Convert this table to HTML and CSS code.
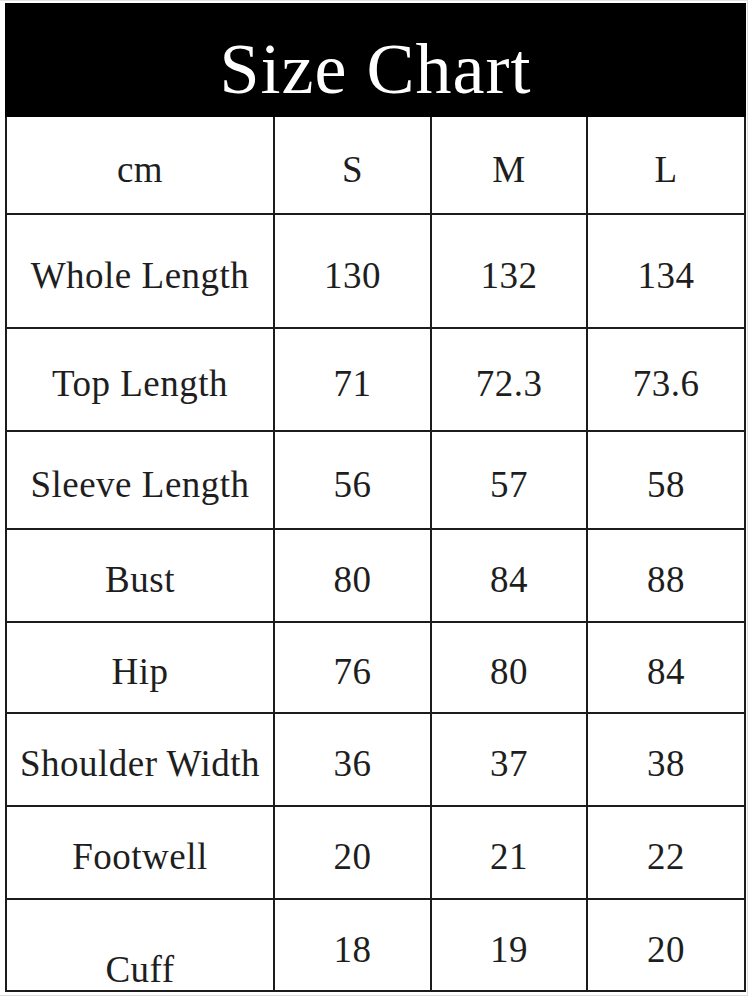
FILE: index.html
```html
<!DOCTYPE html>
<html lang="en">
<head>
<meta charset="utf-8">
<title>Size Chart</title>
<link rel="stylesheet" href="styles.css">
</head>
<body>
<div class="sheet">
  <div class="title">Size Chart</div>
  <div class="chart">
    <div class="cell">cm</div>
    <div class="cell">S</div>
    <div class="cell">M</div>
    <div class="cell">L</div>

    <div class="cell">Whole Length</div>
    <div class="cell">130</div>
    <div class="cell">132</div>
    <div class="cell">134</div>

    <div class="cell">Top Length</div>
    <div class="cell">71</div>
    <div class="cell">72.3</div>
    <div class="cell">73.6</div>

    <div class="cell">Sleeve Length</div>
    <div class="cell">56</div>
    <div class="cell">57</div>
    <div class="cell">58</div>

    <div class="cell">Bust</div>
    <div class="cell">80</div>
    <div class="cell">84</div>
    <div class="cell">88</div>

    <div class="cell">Hip</div>
    <div class="cell">76</div>
    <div class="cell">80</div>
    <div class="cell">84</div>

    <div class="cell">Shoulder Width</div>
    <div class="cell">36</div>
    <div class="cell">37</div>
    <div class="cell">38</div>

    <div class="cell">Footwell</div>
    <div class="cell">20</div>
    <div class="cell">21</div>
    <div class="cell">22</div>

    <div class="cell cell-bottom">Cuff</div>
    <div class="cell cell-last">18</div>
    <div class="cell cell-last">19</div>
    <div class="cell cell-last">20</div>
  </div>
</div>
</body>
</html>
```

FILE: styles.css
```css
html, body {
  margin: 0;
  padding: 0;
  background: #ffffff;
}

.sheet {
  width: 748px;
  height: 996px;
  border-top: 1px solid #e2e2e2;
  border-right: 1px solid #dcdcdc;
  border-bottom: 1px solid #dcdcdc;
  padding: 2px 0 0 5px;
  box-sizing: border-box;
  font-family: "Liberation Serif", "DejaVu Serif", serif;
  color: #1e1e1e;
}

.title {
  width: 741px;
  height: 114px;
  background: #000000;
  color: #ffffff;
  display: flex;
  align-items: center;
  justify-content: center;
  padding-top: 18px;
  box-sizing: border-box;
  font-size: 72px;
  line-height: 1;
  letter-spacing: 1px;
}

.chart {
  display: grid;
  width: 741px;
  grid-template-columns: 266px 155px 154px 156px;
  grid-template-rows: 96px 112px 101px 96px 91px 89px 91px 91px 90px;
  gap: 2px;
  padding: 0 2px 2px 2px;
  box-sizing: border-box;
  background: #1c1c1c;
}

.cell {
  background: #ffffff;
  display: flex;
  align-items: center;
  justify-content: center;
  padding-top: 8px;
  box-sizing: border-box;
  font-size: 37px;
  line-height: 1;
  letter-spacing: 0.5px;
  white-space: nowrap;
}

.cell-bottom {
  align-items: flex-end;
  padding-top: 0;
  padding-bottom: 2px;
}

.cell-last {
  padding-top: 8px;
}
```
